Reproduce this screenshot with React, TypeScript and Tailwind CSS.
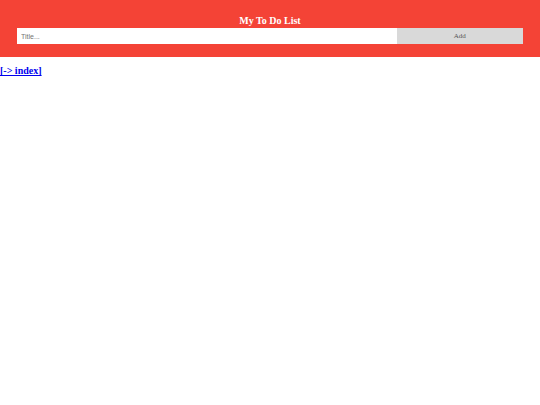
import React from 'react';

const App: React.FC = () => {
  return (
    <div className="w-full min-h-screen bg-white" style={{ fontFamily: '"Liberation Serif", serif' }}>
      {/* Header */}
      <div className="bg-[#f44336] h-[57px] pt-[15px] px-[17px] text-center">
        <h2 className="text-[10px] leading-[12px] font-bold text-white mb-[1px]">My To Do List</h2>
        <div className="flex h-[16px]">
          <input
            type="text"
            placeholder="Title..."
            className="w-3/4 h-full bg-white px-[4px] text-[7px] outline-none placeholder:text-[#757575] font-['Liberation_Sans',sans-serif]"
          />
          <span className="w-1/4 h-full bg-[#d9d9d9] text-[#555] text-[7px] flex items-center justify-center">
            Add
          </span>
        </div>
      </div>

      <p className="mt-[8px] text-[10px] leading-[12px]">
        <a href="#" className="font-bold text-[#0000ee] underline">
          [-&gt; index]
        </a>
      </p>
    </div>
  );
};

export default App;
